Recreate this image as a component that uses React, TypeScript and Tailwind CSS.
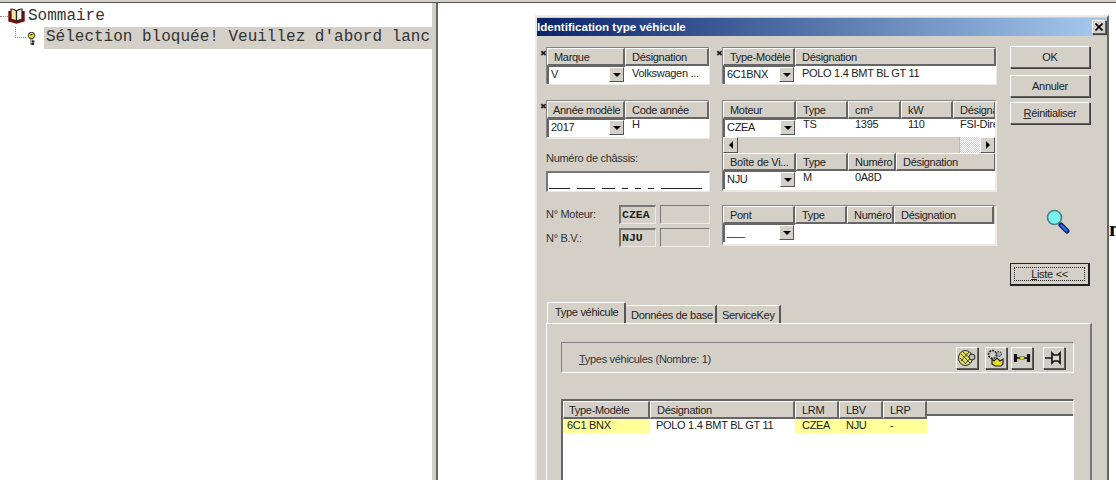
import React from 'react';

const raised = 'border border-t-white border-l-white border-r-[#5f5f5f] border-b-[#5f5f5f] shadow-[1px_1px_0_#404040]';
const sunken = 'border-t-2 border-l-2 border-[#777] border-r border-b border-r-[#eeeae3] border-b-[#eeeae3]';

const Head: React.FC<{ w: number | string; label: React.ReactNode; className?: string }> = ({ w, label, className }) => (
  <div
    style={{ width: w }}
    className={`shrink-0 h-[18px] pl-[6px] leading-[17px] overflow-hidden whitespace-nowrap bg-[#d4d0c8] border-t border-l border-t-white border-l-white border-r-2 border-b-2 border-r-[#666666] border-b-[#666666] ${className ?? ''}`}
  >
    {label}
  </div>
);

const Combo: React.FC<{ w: number; value: string; h?: number }> = ({ w, value, h = 18 }) => (
  <div style={{ width: w, height: h }} className="shrink-0 flex items-start bg-white border-l-2 border-t border-[#666666] pl-[2px]">
    <span className="flex-1 leading-[11px] pt-[2px] text-[#222]">{value}</span>
    <span className="w-[15px] h-[15px] mr-px flex items-center justify-center bg-[#d4d0c8] border border-t-white border-l-white border-r-[#555] border-b-[#555]">
      <span className="w-0 h-0 border-x-[4px] border-x-transparent border-t-[4px] border-t-black" />
    </span>
  </div>
);

const Mark = () => <span className="absolute -left-[7px] top-[2px] text-[8px] leading-none font-bold text-[#222] font-['DejaVu_Sans']">✖</span>;

const Frame: React.FC<{ className?: string; children: React.ReactNode }> = ({ className, children }) => (
  <div className={`relative border-t border-l border-t-[#808080] border-l-[#808080] border-r-2 border-b-2 border-r-[#eeeae3] border-b-[#eeeae3] ${className ?? ''}`}>
    {children}
  </div>
);

const Button: React.FC<{ children: React.ReactNode; className?: string }> = ({ children, className }) => (
  <button className={`w-[80px] bg-[#d4d0c8] text-[#222] ${raised} ${className ?? ''}`}>{children}</button>
);

const Row: React.FC<{ children: React.ReactNode }> = ({ children }) => <div className="flex">{children}</div>;

const Cell: React.FC<{ w: number | string; children?: React.ReactNode; className?: string }> = ({ w, children, className }) => (
  <div style={{ width: w }} className={`shrink-0 pl-[7px] leading-[14px] overflow-hidden whitespace-nowrap text-[#222] ${className ?? ''}`}>{children}</div>
);

const Arrow: React.FC<{ left?: boolean }> = ({ left }) => (
  <span className="w-[15px] h-[16px] shrink-0 flex items-center justify-center bg-[#d4d0c8] border border-t-white border-l-white border-r-[#555] border-b-[#555]">
    <span className={`w-0 h-0 border-y-[4px] border-y-transparent ${left ? 'border-r-[4px] border-r-black' : 'border-l-[4px] border-l-black'}`} />
  </span>
);

const IconBtn: React.FC<{ children: React.ReactNode; className?: string }> = ({ children, className }) => (
  <span className={`w-[22px] h-[22px] flex items-center justify-center bg-[#d0cec8] ${raised} ${className ?? ''}`}>
    <svg width="20" height="20" viewBox="0 0 20 20">{children}</svg>
  </span>
);

const BookIcon = () => (
  <svg width="17" height="16" viewBox="0 0 17 16" className="shrink-0">
    <path d="M1 3 V13 L8.5 15 L16 13 V3" fill="#6e1010" stroke="#7a1010" strokeWidth="1.4" />
    <path d="M3 1 C5 1 7 1.5 8.5 3 V13 C7 12 5 11.5 3 11.5 Z" fill="#f4e8a8" stroke="#5a1410" strokeWidth="1.2" />
    <path d="M14 1 C12 1 10 1.5 8.5 3 V13 C10 12 12 11.5 14 11.5 Z" fill="#f2f2ea" stroke="#222" strokeWidth="1.2" />
  </svg>
);

const KeyIcon = () => (
  <svg width="9" height="13" viewBox="0 0 9 13" className="shrink-0">
    <circle cx="4.5" cy="3.5" r="3.2" fill="#f4e81c" stroke="#222" />
    <rect x="3.5" y="2" width="2" height="1.4" fill="#222" />
    <path d="M4.5 6.5 V12.5 M4.5 9.5 H7.5 M4.5 12 H7" stroke="#222" strokeWidth="1.8" fill="none" />
    <path d="M4.5 7 V11.5" stroke="#f4e81c" strokeWidth="0.8" fill="none" />
  </svg>
);

const Loupe = () => (
  <svg width="24" height="25" viewBox="0 0 24 25">
    <path d="M15 16 L21 22" stroke="#101f6e" strokeWidth="5" strokeLinecap="round" />
    <path d="M15.5 16.5 L20.5 21.5" stroke="#1f7bf0" strokeWidth="2.4" strokeLinecap="round" />
    <circle cx="8.5" cy="8.5" r="7" fill="#78f4f2" stroke="#4d7f88" strokeWidth="1.6" />
  </svg>
);

export default function App() {
  return (
    <div className="relative w-[1116px] h-[480px] overflow-hidden bg-white font-['Liberation_Sans',sans-serif] text-[11px] tracking-[-0.3px] text-[#222]">
      <div className="h-[3px] bg-[#d4d0c8] border-b border-[#555]" />
      <div className="flex h-[477px]">
        {/* tree */}
        <div className="w-[432px] shrink-0 overflow-hidden font-['Liberation_Mono',monospace] text-[16px] tracking-normal text-[#333]">
          <div className="flex items-center h-[22px] mt-[2px]">
            <span className="w-[8px] border-b border-dotted border-[#888]" />
            <BookIcon />
            <span className="ml-[3px]">Sommaire</span>
          </div>
          <div className="flex items-center h-[22px] ml-[15px]">
            <span className="w-[11px] h-[11px] -mt-[11px] border-l border-b border-dotted border-[#888]" />
            <span className="ml-px"><KeyIcon /></span>
            <span className="ml-[8px] bg-[#d4d0c8] h-[22px] leading-[21px] w-[388px] pl-[2px] whitespace-nowrap overflow-hidden">Sélection bloquée! Veuillez d'abord lanc</span>
          </div>
        </div>
        {/* splitter */}
        <div className="w-[6px] shrink-0 bg-[#d4d0c8] border-r-2 border-[#666]" />
        <div className="flex-1" />
      </div>

      <span className="absolute left-[1109px] top-[219px] text-[22px] leading-[20px] font-bold font-['Liberation_Serif'] text-black">n</span>

      {/* dialog window */}
      <div className="absolute left-[535px] top-[15px] w-[574px] h-[480px] bg-[#d4d0c8] border-t-2 border-l-2 border-t-[#eeeae3] border-l-[#eeeae3] border-r-2 border-r-[#666]">
        <div className="h-[18px] mt-[1px] flex items-center justify-between pr-[1px] bg-[linear-gradient(to_right,#0a246a,#a6caf0)]">
          <span className="text-white font-bold text-[11.6px] tracking-normal leading-none">Identification type véhicule</span>
          <span className={`w-[14px] h-[14px] flex items-center justify-center bg-[#d4d0c8] ${raised}`}>
            <svg width="8" height="8" viewBox="0 0 8 8"><path d="M0.5 0.5 L7.5 7.5 M7.5 0.5 L0.5 7.5" stroke="#000" strokeWidth="1.6" /></svg>
          </span>
        </div>

        <div className="flex mt-[11px] pl-[9px]">
          {/* left fields */}
          <div className="w-[164px] shrink-0">
            <Frame className="h-[38px]">
              <Mark />
              <Row><Head w={78} label="Marque" /><Head w={84} label="Désignation" /></Row>
              <Row>
                <Combo w={78} value="V" />
                <Cell w={84} className="bg-white h-[18px]">Volkswagen ...</Cell>
              </Row>
            </Frame>
            <Frame className="h-[39px] mt-[15px]">
              <Mark />
              <Row><Head w={78} label="Année modèle" className="!pl-[5px]" /><Head w={84} label="Code année" /></Row>
              <Row>
                <Combo w={78} value="2017" />
                <Cell w={84} className="bg-white h-[19px] !leading-[11px]">H</Cell>
              </Row>
            </Frame>
            <div className="mt-[12px] h-[20px] leading-[14px] text-[#333]">Numéro de châssis:</div>
            <div className={`h-[21px] bg-white flex items-end gap-[7px] pl-[1px] pb-[2px] ${sunken}`}>
              <span className="w-[21px] border-b border-[#222]" />
              <span className="w-[18px] border-b border-[#222]" />
              <span className="w-[13px] border-b border-[#222]" />
              <span className="w-[6px] border-b border-[#222]" />
              <span className="w-[6px] border-b border-[#222]" />
              <span className="w-[6px] border-b border-[#222]" />
              <span className="w-[41px] border-b border-[#222]" />
            </div>
            <div className="mt-[13px] flex h-[19px] items-center">
              <span className="w-[73px] text-[#333]">N° Moteur:</span>
              <span className={`w-[37px] h-[19px] pl-px leading-[15px] tracking-normal font-['Liberation_Mono'] font-bold text-[11.5px] ${sunken}`}>CZEA</span>
              <span className="ml-[4px] w-[50px] h-[19px] border-t border-l border-[#777] border-r border-b border-r-[#eeeae3] border-b-[#eeeae3]" />
            </div>
            <div className="mt-[4px] flex h-[19px] items-center">
              <span className="w-[73px] pt-[1px] text-[#333]">N° B.V.:</span>
              <span className={`w-[37px] h-[19px] pl-px leading-[15px] tracking-normal font-['Liberation_Mono'] font-bold text-[11.5px] ${sunken}`}>NJU</span>
              <span className="ml-[4px] w-[50px] h-[19px] border-t border-l border-[#777] border-r border-b border-r-[#eeeae3] border-b-[#eeeae3]" />
            </div>
          </div>

          {/* middle fields */}
          <div className="w-[275px] shrink-0 ml-[12px]">
            <Frame className="h-[38px]">
              <Mark />
              <Row><Head w={72} label="Type-Modèle" /><Head w={201} label="Désignation" /></Row>
              <Row>
                <Combo w={72} value="6C1BNX" />
                <Cell w={201} className="bg-white h-[18px]">POLO 1.4 BMT BL GT 11</Cell>
              </Row>
            </Frame>
            <Frame className="mt-[15px] h-[92px] overflow-hidden">
              <Row>
                <Head w={73} label="Moteur" /><Head w={52} label="Type" /><Head w={53} label="cm³" /><Head w={52} label="kW" /><Head w={43} label="Désignation" />
              </Row>
              <Row>
                <Combo w={73} value="CZEA" />
                <Cell w={52} className="bg-white h-[18px] !leading-[11px]">TS</Cell>
                <Cell w={53} className="bg-white h-[18px] !leading-[11px]">1395</Cell>
                <Cell w={52} className="bg-white h-[18px] !leading-[11px]">110</Cell>
                <Cell w={43} className="bg-white h-[18px] !leading-[11px]">FSI-Direct</Cell>
              </Row>
              <div className="flex h-[16px] bg-[#d4d0c8]">
                <Arrow left />
                <span className="w-[222px] border-r border-[#bbb]" />
                <span className="flex-1 bg-[repeating-conic-gradient(#ffffff_0_25%,#d4d0c8_0_50%)] bg-[length:2px_2px]" />
                <Arrow />
              </div>
              <Row>
                <Head w={73} label="Boîte de Vi..." /><Head w={52} label="Type" /><Head w={48} label="Numéro" /><Head w={100} label="Désignation" />
              </Row>
              <div className="flex bg-white h-[19px]">
                <Combo w={73} value="NJU" />
                <Cell w={52} className="!leading-[12px]">M</Cell>
                <Cell w={48} className="!leading-[12px]">0A8D</Cell>
              </div>
            </Frame>
            <Frame className="mt-[13px] h-[41px]">
              <Row>
                <Head w={72} label="Pont" /><Head w={52} label="Type" /><Head w={47} label="Numéro" /><Head w={100} label="Désignation" />
              </Row>
              <div className="flex bg-white h-[20px]">
                <Combo w={72} value="___" />
              </div>
            </Frame>
          </div>

          {/* buttons */}
          <div className="w-[80px] shrink-0 ml-[13px] -mt-[1px] flex flex-col">
            <Button className="h-[22px]">OK</Button>
            <Button className="h-[22px] mt-[7px]">Annuler</Button>
            <Button className="h-[22px] mt-[5px]"><span className="underline">R</span>éinitialiser</Button>
            <div className="mt-[85px] ml-[36px]"><Loupe /></div>
            <button className="mt-[29px] w-[80px] h-[23px] p-[3px] bg-[#d4d0c8] border border-[#222] border-r-2 border-b-2">
              <span className="block h-full leading-[12px] border border-dotted border-[#222] text-[#222]"><span className="underline">L</span>iste &lt;&lt;</span>
            </button>
          </div>
        </div>

        {/* tabs */}
        <div className="ml-[9px] mt-[17px] w-[546px]">
          <div className="flex items-end h-[20px] pl-px">
            <span className="w-[79px] h-[21px] relative z-10 pl-[7px] leading-[18px] whitespace-nowrap bg-[#d4d0c8] border-t border-l border-white border-r-2 border-r-[#555] rounded-t-[2px]">Type véhicule</span>
            <span className="w-[91px] h-[18px] pl-[5px] leading-[18px] border-t border-white border-r-2 border-r-[#555] whitespace-nowrap">Données de base</span>
            <span className="w-[64px] h-[18px] pl-[5px] leading-[18px] border-t border-white border-r-2 border-r-[#555] whitespace-nowrap">ServiceKey</span>
          </div>
          <div className="h-[160px] border-t border-l border-white border-r-2 border-r-[#777] pt-[18px] pl-[14px]">
            <div className="w-[513px] h-[31px] flex items-center border border-t-[#808080] border-l-[#808080] border-r-white border-b-white pl-[17px] pr-[8px] text-[#333]">
              <span className="pt-[3px]"><span className="underline">T</span>ypes véhicules (Nombre: 1)</span>
              <span className="ml-auto flex">
                <IconBtn>
                  <ellipse cx="8.5" cy="10" rx="7" ry="7.5" fill="#e6e060" stroke="#222" />
                  <path d="M4 6 L13 15 M3 10 L9 16 M6 4 L15 12 M4 13 L12 4 M8 16 L15 8" stroke="#333" strokeWidth="0.9" />
                  <circle cx="15" cy="9" r="3" fill="#bbb" stroke="#222" />
                </IconBtn>
                <IconBtn className="ml-[7px]">
                  <circle cx="6.5" cy="6.5" r="4" fill="#ccc" stroke="#222" strokeWidth="1.6" strokeDasharray="2 1" />
                  <circle cx="13" cy="6" r="2.5" fill="#aaa" stroke="#222" strokeDasharray="1.5 1" />
                  <path d="M6 11 L8 13 L11 10 L14 13 L17 11 V16 L15 18 H9 L6 16 Z" fill="#e6e020" stroke="#222" strokeWidth="1.2" />
                </IconBtn>
                <IconBtn className="ml-[4px]">
                  <path d="M3.5 6 V14 M16.5 6 V14" stroke="#111" strokeWidth="3.2" />
                  <path d="M5 10 H15" stroke="#111" strokeWidth="1.6" />
                  <rect x="8" y="8.5" width="4" height="3" fill="#f0e820" stroke="#555" strokeWidth="0.5" />
                </IconBtn>
                <IconBtn className="ml-[10px]">
                  <path d="M1 10 H8" stroke="#222" strokeWidth="1.6" />
                  <path d="M8 5 L10 7 H14 L16 5 V15 L14 13 H10 L8 15 Z" fill="#dcd8cc" stroke="#111" strokeWidth="1.6" />
                </IconBtn>
              </span>
            </div>
            <div className="mt-[26px] w-[513px] h-[90px] border-t-2 border-l-2 border-[#666] border-r border-r-white bg-white">
              <div className="flex">
                <Head w={87} label="Type-Modèle" className="h-[15px] leading-[14px] !pl-[5px]" /><Head w={145} label="Désignation" className="h-[15px] leading-[14px]" /><Head w={44} label="LRM" className="h-[15px] leading-[14px]" /><Head w={44} label="LBV" className="h-[15px] leading-[14px]" /><Head w={44} label="LRP" className="h-[15px] leading-[14px]" />
                <div className="flex-1 h-[15px] bg-[#d4d0c8] border-t border-white border-b-2 border-b-[#666]" />
              </div>
              <div className="flex h-[14px]">
                <Cell w={87} className="bg-[#ffff99] !pl-[4px] !leading-[12px]">6C1 BNX</Cell>
                <Cell w={145} className="!pl-[6px] !leading-[12px]">POLO 1.4 BMT BL GT 11</Cell>
                <Cell w={44} className="bg-[#ffff99] !leading-[12px]">CZEA</Cell>
                <Cell w={44} className="bg-[#ffff99] !leading-[12px]">NJU</Cell>
                <Cell w={44} className="bg-[#ffff99] !leading-[12px]">-</Cell>
              </div>
            </div>
          </div>
        </div>
      </div>
    </div>
  );
}
